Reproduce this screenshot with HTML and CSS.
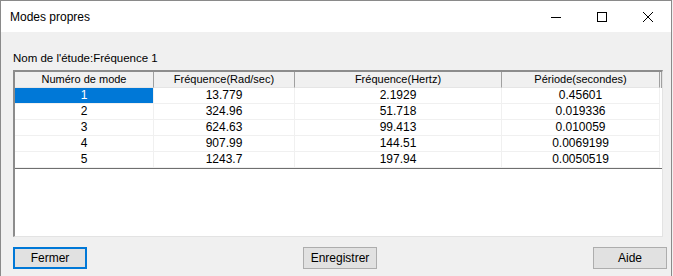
FILE: index.html
```html
<!DOCTYPE html>
<html lang="fr">
<head>
    <meta charset="UTF-8">
    <title>Modes propres</title>
    <link rel="stylesheet" href="styles.css">
</head>
<body>
    <div class="window">
        <div class="titlebar">
            <span class="title">Modes propres</span>
            <div class="caption-buttons">
                <span class="caption-btn" title="Réduire">
                    <svg width="10" height="10" viewBox="0 0 10 10"><path d="M0 5.5h10" stroke="#000" stroke-width="1"/></svg>
                </span>
                <span class="caption-btn" title="Agrandir">
                    <svg width="10" height="10" viewBox="0 0 10 10"><rect x="0.5" y="0.5" width="9" height="9" fill="none" stroke="#000" stroke-width="1"/></svg>
                </span>
                <span class="caption-btn" title="Fermer">
                    <svg width="10" height="10" viewBox="0 0 10 10"><path d="M0 0L10 10M10 0L0 10" stroke="#000" stroke-width="1"/></svg>
                </span>
            </div>
        </div>

        <div class="dialog-body">
            <div class="study-name">Nom de l'étude:Fréquence 1</div>

            <!-- List view with the modes -->
            <div class="list-view">
                <div class="grid">
                    <div class="head">Numéro de mode</div>
                    <div class="head">Fréquence(Rad/sec)</div>
                    <div class="head">Fréquence(Hertz)</div>
                    <div class="head last">Période(secondes)</div>

                    <div class="cell selected">1</div>
                    <div class="cell">13.779</div>
                    <div class="cell">2.1929</div>
                    <div class="cell">0.45601</div>

                    <div class="cell">2</div>
                    <div class="cell">324.96</div>
                    <div class="cell">51.718</div>
                    <div class="cell">0.019336</div>

                    <div class="cell">3</div>
                    <div class="cell">624.63</div>
                    <div class="cell">99.413</div>
                    <div class="cell">0.010059</div>

                    <div class="cell">4</div>
                    <div class="cell">907.99</div>
                    <div class="cell">144.51</div>
                    <div class="cell">0.0069199</div>

                    <div class="cell">5</div>
                    <div class="cell">1243.7</div>
                    <div class="cell">197.94</div>
                    <div class="cell">0.0050519</div>
                </div>
                <div class="filler"></div>
            </div>

            <div class="button-row">
                <button type="button" class="btn default">Fermer</button>
                <button type="button" class="btn">Enregistrer</button>
                <button type="button" class="btn">Aide</button>
            </div>
        </div>
    </div>
</body>
</html>
```

FILE: styles.css
```css
html, body {
    margin: 0;
    padding: 0;
    background-color: #f0f0f0;
}

.window {
    box-sizing: border-box;
    width: 672px;
    height: 280px;
    border: 1px solid #8a8a8a;
    background-color: #f0f0f0;
    font-family: "Liberation Sans", Arial, sans-serif;
    color: #000;
}

.titlebar {
    display: flex;
    align-items: center;
    justify-content: space-between;
    height: 31px;
    background-color: #fff;
}

.title {
    padding-left: 9px;
    font-size: 12px;
}

.caption-buttons {
    display: flex;
}

.caption-btn {
    display: flex;
    align-items: center;
    justify-content: center;
    width: 46px;
    height: 31px;
}

.dialog-body {
    padding: 19px 4px 0 12px;
}

.study-name {
    font-size: 11.5px;
    line-height: 14px;
    height: 14px;
    margin-bottom: 5px;
}

.list-view {
    box-sizing: border-box;
    width: 650px;
    height: 167px;
    background-color: #fff;
    border-top: 2px solid #8c8c8c;
    border-left: 2px solid #8c8c8c;
    border-right: 1px solid #e3e3e3;
    border-bottom: 1px solid #e3e3e3;
    display: flex;
    flex-direction: column;
}

.grid {
    display: grid;
    grid-template-columns: 139px 141px 207px 158px;
    font-size: 11px;
}

.head {
    box-sizing: border-box;
    height: 16px;
    line-height: 15px;
    text-align: center;
    background-color: #f0f0f0;
    border-right: 1px solid #a0a0a0;
    border-bottom: 1px solid #e5e5e5;
}

.head.last {
    border-right: 1px solid #a0a0a0;
    box-shadow: 1px 0 0 #f0f0f0, 2px 0 0 #a0a0a0;
}

.cell {
    box-sizing: border-box;
    height: 16px;
    line-height: 15px;
    font-size: 12px;
    text-align: center;
    border-right: 1px solid #f0f0f0;
    border-bottom: 1px solid #f0f0f0;
}

.cell.selected {
    background-color: #0078d7;
    color: #fff;
}

.filler {
    flex: 1;
    border-top: 1px solid #6f6f6f;
}

.button-row {
    display: flex;
    justify-content: space-between;
    margin-top: 10px;
}

.btn {
    box-sizing: border-box;
    width: 74px;
    height: 22px;
    padding: 0;
    font-family: "Liberation Sans", Arial, sans-serif;
    font-size: 12px;
    color: #000;
    background-color: #e1e1e1;
    border: 1px solid #adadad;
    border-radius: 0;
}

.btn.default {
    border: 2px solid #0078d7;
}
```
